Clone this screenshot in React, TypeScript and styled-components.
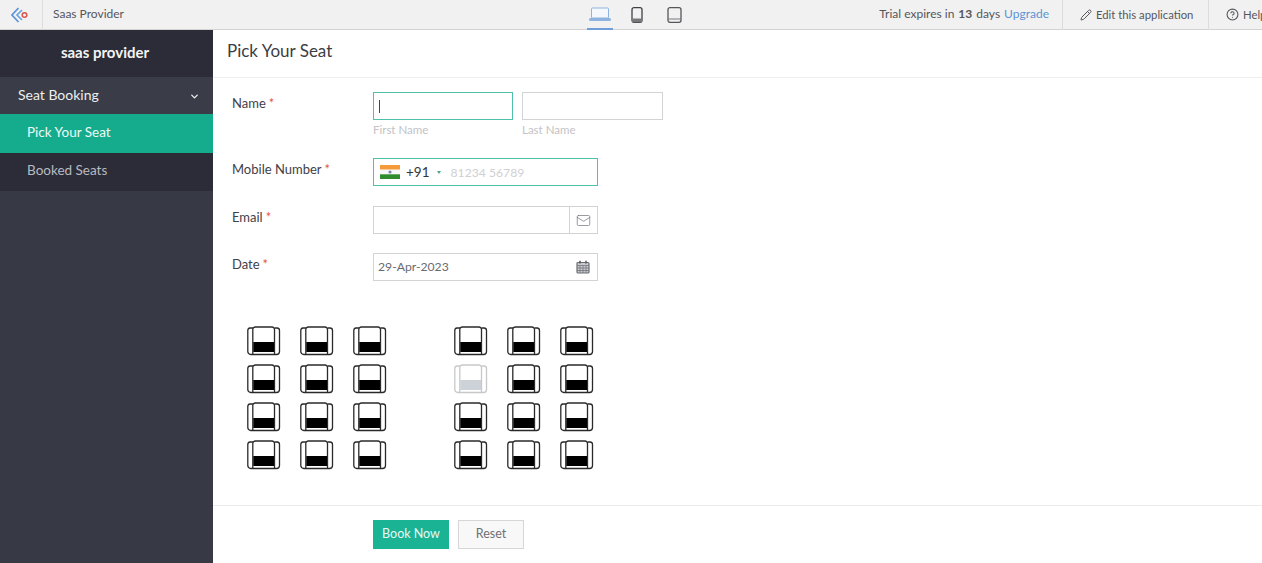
import styled, { createGlobalStyle } from 'styled-components';
import { ChevronDown, Pencil, Mail, CircleHelp } from 'lucide-react';

const GlobalStyle = createGlobalStyle`
  html, body { margin: 0; padding: 0; height: 563px; overflow: hidden; background: #fff; }
  body { font-family: Lato, "Open Sans", sans-serif; color: #3a3d45; }
  * { box-sizing: border-box; }
`;

const Page = styled.div`
  width: 1262px;
  height: 563px;
  display: flex;
  flex-direction: column;
  overflow: hidden;
`;

const TopBar = styled.header`
  height: 30px;
  flex: none;
  display: grid;
  grid-template-columns: 43px 530px 120px 1fr;
  background: #f1f1f1;
  border-bottom: 1px solid #d3d3d3;
  font-size: 12px;
`;

const LogoCell = styled.div`
  display: flex;
  align-items: center;
  padding: 0 0 1px 11px;
  border-right: 1px solid #dedede;
`;

const AppName = styled.div`
  display: flex;
  align-items: center;
  padding: 0 0 3px 10px;
  color: #55565c;
`;

const Devices = styled.div`
  display: flex;
  align-items: flex-start;
  gap: 11px;
  margin-left: 14px;
`;

const DeviceTab = styled.div<{ $active?: boolean }>`
  width: 26px;
  height: 30px;
  padding-top: 7px;
  display: flex;
  justify-content: center;
  border-bottom: 2px solid ${p => (p.$active ? '#6f9ed8' : 'transparent')};
`;

const TopRight = styled.div`
  display: flex;
  justify-content: flex-end;
  align-items: stretch;
  white-space: nowrap;
  overflow: hidden;
  color: #55565c;
  font-size: 11.3px;
  svg { flex: none; }
`;

const Trial = styled.div`
  display: flex;
  align-items: center;
  gap: 4px;
  padding: 0 13px 3px 0;
  font-size: 12px;
  strong { font-weight: 700; }
  a { color: #5b93d6; text-decoration: none; }
`;

const TopAction = styled.div<{ $w: number }>`
  width: ${p => p.$w}px;
  flex: none;
  display: flex;
  align-items: center;
  gap: 4px;
  padding: 0 0 1px 17px;
  border-left: 1px solid #dcdcdc;
`;

const Body = styled.div`
  flex: 1;
  display: flex;
  min-height: 0;
`;

const Sidebar = styled.aside`
  width: 213px;
  flex: none;
  background: #373a45;
  display: flex;
  flex-direction: column;
`;

const Brand = styled.div`
  height: 47px;
  display: flex;
  align-items: center;
  justify-content: center;
  padding: 0 3px 3px 0;
  background: #2b2c37;
  color: #f4f4f4;
  font-size: 15px;
  font-weight: 700;
`;

const MenuHead = styled.div`
  height: 37px;
  display: flex;
  align-items: center;
  justify-content: space-between;
  padding: 0 13px 2px 18px;
  background: #3a3c48;
  color: #eeeeee;
  font-size: 14px;
  svg { margin-top: 3px; }
`;

const MenuItem = styled.div<{ $active?: boolean }>`
  height: ${p => (p.$active ? 39 : 38)}px;
  display: flex;
  align-items: center;
  padding: 0 0 ${p => (p.$active ? 3 : 5)}px 27px;
  font-size: 13.5px;
  background: ${p => (p.$active ? '#15ac8e' : '#2b2c37')};
  color: ${p => (p.$active ? '#eef9f6' : '#b9bac0')};
`;

const Main = styled.main`
  flex: 1;
  display: flex;
  flex-direction: column;
  min-width: 0;
`;

const TitleBar = styled.div`
  height: 48px;
  flex: none;
  display: flex;
  align-items: center;
  padding: 0 0 6px 14px;
  border-bottom: 1px solid #eeeeee;
  font-size: 17px;
  color: #3c3d44;
`;

const Form = styled.div`
  flex: 1;
  padding: 14px 0 0 19px;
`;

const Field = styled.div<{ $h: number }>`
  height: ${p => p.$h}px;
  display: grid;
  grid-template-columns: 141px 1fr;
`;

const Label = styled.label`
  padding-top: 3px;
  font-size: 13px;
  color: #3f4148;
  span { color: #e5534b; margin-left: 3px; }
`;

const NameRow = styled.div`
  display: flex;
  gap: 9px;
`;

const NameCol = styled.div`
  font-size: 11.5px;
  color: #c2c3c6;
`;

const Hint = styled.div`
  margin-top: 3px;
`;

const Box = styled.div<{ $focus?: boolean; $w?: number }>`
  width: ${p => p.$w ?? 225}px;
  height: 28px;
  display: flex;
  align-items: center;
  background: #fff;
  border: 1px solid ${p => (p.$focus ? '#4fc0aa' : '#d2d3d5')};
`;

const Caret = styled.i`
  width: 1px;
  height: 13px;
  margin-left: 5px;
  background: #44464c;
`;

const FlagWrap = styled.div`
  display: flex;
  margin-left: 6px;
`;

const Code = styled.span`
  margin-left: 6px;
  font-size: 13.5px;
  color: #33353b;
`;

const DropArrow = styled.i`
  width: 0;
  height: 0;
  margin: 1px 0 0 7px;
  border-left: 2.5px solid transparent;
  border-right: 2.5px solid transparent;
  border-top: 3px solid #4fa592;
`;

const Placeholder = styled.span`
  margin-left: 10px;
  font-size: 12.2px;
  color: #cfd0d2;
`;

const BoxValue = styled.span`
  flex: 1;
  padding: 0 0 2px 4px;
  font-size: 12.2px;
  color: #6a6b70;
`;

const Addon = styled.span<{ $divided?: boolean }>`
  width: 28px;
  height: 100%;
  flex: none;
  display: flex;
  align-items: center;
  justify-content: center;
  color: #777a80;
  border-left: ${p => (p.$divided ? '1px solid #d2d3d5' : 'none')};
`;

const SeatMap = styled.div`
  display: flex;
  gap: 67px;
  margin: 45px 0 0 15px;
`;

const SeatBlock = styled.div`
  display: grid;
  grid-template-columns: repeat(3, 34px);
  grid-auto-rows: 30px;
  column-gap: 19px;
  row-gap: 8px;
`;

const SeatIcon = styled.svg<{ $off?: boolean }>`
  display: block;
  opacity: ${p => (p.$off ? 0.25 : 1)};
`;

const Footer = styled.div`
  height: 58px;
  flex: none;
  display: flex;
  align-items: flex-start;
  gap: 9px;
  padding: 14px 0 0 160px;
  border-top: 1px solid #eaeaea;
`;

const Button = styled.div<{ $primary?: boolean }>`
  height: 29px;
  display: flex;
  align-items: center;
  justify-content: center;
  padding-bottom: 2px;
  font-size: 12.5px;
  width: ${p => (p.$primary ? 76 : 66)}px;
  background: ${p => (p.$primary ? '#1ab394' : '#f8f8f8')};
  color: ${p => (p.$primary ? '#e6f7f3' : '#6f7075')};
  border: 1px solid ${p => (p.$primary ? '#1ab394' : '#d6d6d6')};
`;

const Logo = () => (
  <svg width="18" height="16" viewBox="0 0 18 16" fill="none">
    <path d="M7.5 1 L1 8 L7.5 15" stroke="#5b93d6" strokeWidth="1.7" />
    <path d="M11 3 L6 8 L11 13" stroke="#6fa4dc" strokeWidth="1.7" />
    <circle cx="13.5" cy="8" r="2.3" stroke="#d9534f" strokeWidth="1.5" />
  </svg>
);

const LaptopIcon = () => (
  <svg width="24" height="15" viewBox="0 0 24 15" fill="none">
    <rect x="3.5" y="1" width="17" height="10" rx="1" stroke="#8fb3e0" strokeWidth="1" fill="#f4f7fb" />
    <rect x="1" y="11" width="22" height="3" rx="1.5" fill="#8fb3e0" />
  </svg>
);

const PhoneIcon = () => (
  <svg width="12" height="16" viewBox="0 0 12 16" fill="none">
    <rect x="1" y="0.7" width="10" height="14.6" rx="2" stroke="#3f4045" strokeWidth="1.3" />
    <rect x="1" y="11.5" width="10" height="3.8" fill="#77787c" />
  </svg>
);

const TabletIcon = () => (
  <svg width="15" height="16" viewBox="0 0 15 16" fill="none">
    <rect x="1" y="0.7" width="13" height="14.6" rx="2" stroke="#55565a" strokeWidth="1.3" />
    <path d="M1 12 H14" stroke="#77787c" strokeWidth="1" />
  </svg>
);

const IndiaFlag = () => (
  <svg width="20" height="14" viewBox="0 0 20 14">
    <rect width="20" height="4.7" fill="#f59b3a" />
    <rect y="4.7" width="20" height="4.6" fill="#f7f7f7" />
    <rect y="9.3" width="20" height="4.7" fill="#2e8b2e" />
    <circle cx="10" cy="7" r="1.6" fill="#7a86b8" />
  </svg>
);

const CalendarIcon = () => (
  <svg width="14" height="14" viewBox="0 0 14 14" fill="none">
    <rect x="1" y="2.5" width="12" height="10.5" rx="1" stroke="#6b6d72" strokeWidth="1.2" fill="#c9cace" />
    <path d="M1 5.5 H13 M1 8 H13 M1 10.5 H13 M4 5.5 V13 M7 5.5 V13 M10 5.5 V13" stroke="#6b6d72" strokeWidth="0.7" />
    <path d="M4 0.8 V3.5 M10 0.8 V3.5" stroke="#55575c" strokeWidth="1.5" />
  </svg>
);

const Seat = ({ off }: { off?: boolean }) => (
  <SeatIcon $off={off} width="34" height="30" viewBox="0 0 34 30" fill="none">
    <path d="M6 2 H3 A2.5 2.5 0 0 0 0.8 4.5 V25.5 A3 3 0 0 0 3.8 28.5 H29.5 A3 3 0 0 0 32.5 25.5 V4.5 A2.5 2.5 0 0 0 30 2 H27.5" stroke="#2a2a2a" strokeWidth="1.3" />
    <path d="M5.8 28.5 V3.5 A2.5 2.5 0 0 1 8.3 1 H25 A2.5 2.5 0 0 1 27.5 3.5 V28.5" stroke="#2a2a2a" strokeWidth="1.3" />
    <rect x="6.3" y="16" width="20.7" height="10" fill={off ? '#3d4f6a' : '#000'} />
  </SeatIcon>
);

const block = [0, 1, 2, 3, 4, 5, 6, 7, 8, 9, 10, 11];

export default function App() {
  return (
    <Page>
      <GlobalStyle />
      <TopBar>
        <LogoCell><Logo /></LogoCell>
        <AppName>Saas Provider</AppName>
        <Devices>
          <DeviceTab $active><LaptopIcon /></DeviceTab>
          <DeviceTab><PhoneIcon /></DeviceTab>
          <DeviceTab><TabletIcon /></DeviceTab>
        </Devices>
        <TopRight>
          <Trial>Trial expires in <strong>13</strong> days <a>Upgrade</a></Trial>
          <TopAction $w={146}><Pencil size={12} />Edit this application</TopAction>
          <TopAction $w={54}><CircleHelp size={13} />Help</TopAction>
        </TopRight>
      </TopBar>
      <Body>
        <Sidebar>
          <Brand>saas provider</Brand>
          <MenuHead>Seat Booking<ChevronDown size={11} strokeWidth={3} /></MenuHead>
          <MenuItem $active>Pick Your Seat</MenuItem>
          <MenuItem>Booked Seats</MenuItem>
        </Sidebar>
        <Main>
          <TitleBar>Pick Your Seat</TitleBar>
          <Form>
            <Field $h={66}>
              <Label>Name<span>*</span></Label>
              <NameRow>
                <NameCol>
                  <Box $focus $w={140}><Caret /></Box>
                  <Hint>First Name</Hint>
                </NameCol>
                <NameCol>
                  <Box $w={141} />
                  <Hint>Last Name</Hint>
                </NameCol>
              </NameRow>
            </Field>
            <Field $h={48}>
              <Label>Mobile Number<span>*</span></Label>
              <Box $focus>
                <FlagWrap><IndiaFlag /></FlagWrap>
                <Code>+91</Code>
                <DropArrow />
                <Placeholder>81234 56789</Placeholder>
              </Box>
            </Field>
            <Field $h={47}>
              <Label>Email<span>*</span></Label>
              <Box>
                <BoxValue />
                <Addon $divided><Mail size={15} strokeWidth={1.2} /></Addon>
              </Box>
            </Field>
            <Field $h={28}>
              <Label>Date<span>*</span></Label>
              <Box>
                <BoxValue>29-Apr-2023</BoxValue>
                <Addon><CalendarIcon /></Addon>
              </Box>
            </Field>
            <SeatMap>
              <SeatBlock>{block.map(i => <Seat key={i} />)}</SeatBlock>
              <SeatBlock>{block.map(i => <Seat key={i} off={i === 3} />)}</SeatBlock>
            </SeatMap>
          </Form>
          <Footer>
            <Button $primary>Book Now</Button>
            <Button>Reset</Button>
          </Footer>
        </Main>
      </Body>
    </Page>
  );
}
